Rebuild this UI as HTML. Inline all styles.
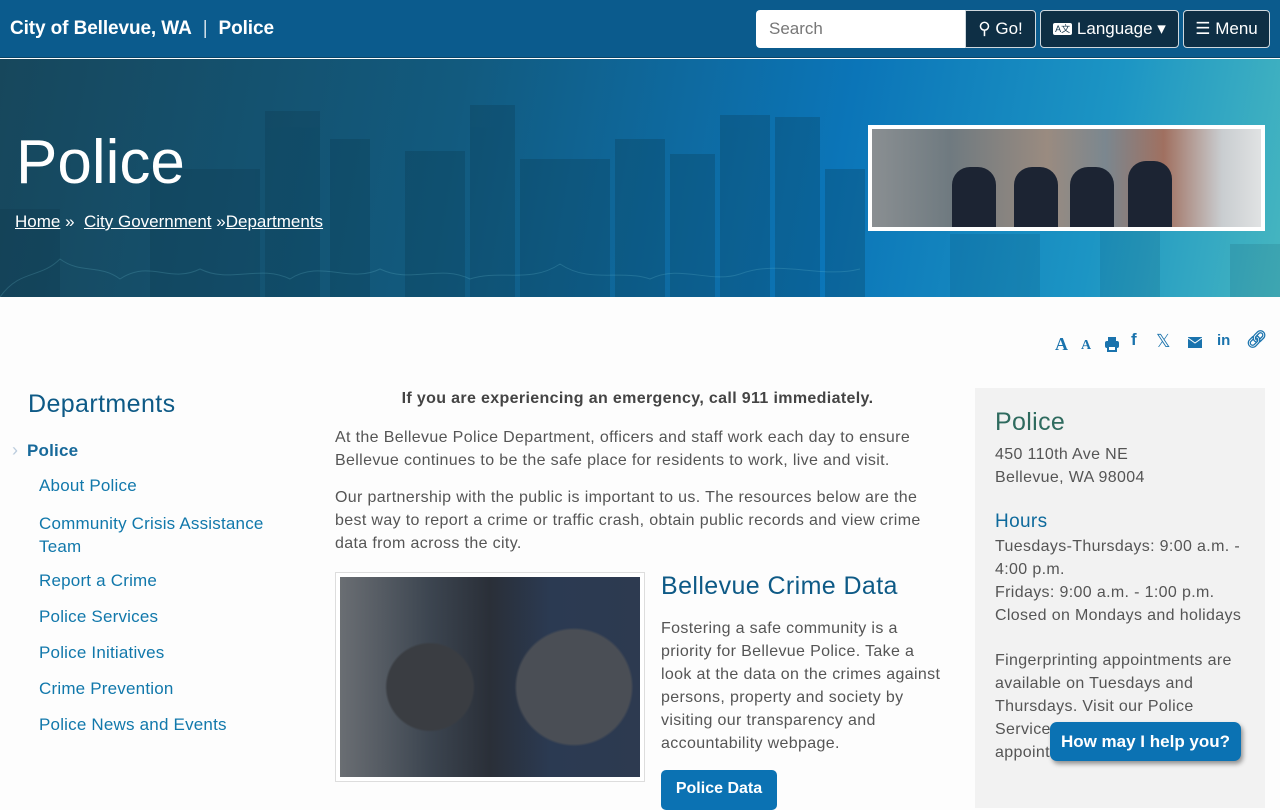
<!DOCTYPE html>
<html><head><meta charset="utf-8"><style>
*{box-sizing:border-box;margin:0;padding:0}
body{width:1280px;height:800px;overflow:hidden;background:#fdfdfd;font-family:"Liberation Sans",sans-serif;color:#444;position:relative}
.hdr{position:absolute;left:0;top:0;width:1280px;height:58px;background:#0b5b8d;border-bottom:1px solid #0a4466}
.brand{position:absolute;left:10px;top:18px;color:#fff;font-size:19px;font-weight:bold;letter-spacing:-0.1px}
.brand span{font-weight:normal;margin:0 11px;opacity:.8}
.search{position:absolute;left:756px;top:10px;width:210px;height:38px;background:#fff;border-radius:4px 0 0 4px;color:#777;font-size:17px;padding:9px 13px}
.btn{position:absolute;top:10px;height:38px;background:#0e2f45;color:#fff;border:1px solid #cfd8de;border-radius:4px;font-size:17px;line-height:36px;text-align:center}
.hero{position:absolute;left:0;top:59px;width:1280px;height:238px;background:linear-gradient(100deg,#17475c 0%,#125a7e 35%,#0b75b8 65%,#1c95c4 85%,#46b6c0 100%);overflow:hidden}
.sky{position:absolute;left:0;bottom:0}
.hero h1{position:absolute;left:16px;top:68px;color:#fff;font-size:62px;font-weight:normal}
.bc{position:absolute;left:15px;top:153px;color:#fff;font-size:17px}
.bc a{color:#fff;text-decoration:underline}
.photo{position:absolute;left:868px;top:66px;width:397px;height:106px;background:#fff;padding:4px}
.photo div{width:100%;height:100%;position:relative;background:linear-gradient(90deg,#8a8f92,#6f7a80 20%,#9a8b80 45%,#7b878f 60%,#a07060 75%,#c9cdd0 90%,#e0e2e3)}
.photo i{position:absolute;bottom:0;width:44px;height:60px;background:#1c2433;border-radius:18px 18px 0 0}
.icons{position:absolute;top:330px;color:#1a73ad;font-weight:bold}
.side h2{position:absolute;left:28px;top:390px;font-size:25px;font-weight:normal;color:#0e5a86;letter-spacing:0.4px}
.nav{position:absolute;left:39px;font-size:17px;color:#1178ab;letter-spacing:0.2px}
.main{position:absolute;left:335px;width:605px;font-size:16px;line-height:23px;color:#555;letter-spacing:0.35px}
.box{position:absolute;left:975px;top:388px;width:290px;height:420px;background:#f2f2f2;padding:0 20px;font-size:16px;line-height:23px;color:#555;letter-spacing:0.35px}
</style></head><body>
<div class="hdr"><div class="brand">City of Bellevue, WA<span>|</span>Police</div>
<div class="search">Search</div>
<div class="btn" style="left:965px;width:71px;border-radius:0 4px 4px 0">&#9906; Go!</div>
<div class="btn" style="left:1040px;width:139px"><span style="display:inline-block;background:#fff;color:#0e2f45;font-size:9px;line-height:12px;padding:0 2px;border-radius:2px;vertical-align:2px">A文</span> Language ▾</div>
<div class="btn" style="left:1183px;width:87px">&#9776; Menu</div>
</div>
<div class="hero">
<svg class="sky" width="1280" height="238" viewBox="0 0 1280 238"><g fill="#0a3447" opacity=".25"><rect x="265" y="52" width="55" height="186"/><rect x="330" y="80" width="40" height="158"/><rect x="405" y="92" width="60" height="146"/><rect x="470" y="46" width="45" height="192"/><rect x="520" y="100" width="90" height="138"/><rect x="615" y="80" width="50" height="158"/><rect x="670" y="95" width="45" height="143"/><rect x="720" y="56" width="50" height="182"/><rect x="775" y="58" width="45" height="180"/><rect x="825" y="110" width="40" height="128"/><rect x="0" y="150" width="60" height="88"/><rect x="150" y="110" width="110" height="128"/></g><g fill="#0a3447" opacity=".12"><rect x="950" y="175" width="90" height="63"/><rect x="1100" y="170" width="60" height="68"/><rect x="1230" y="185" width="50" height="53"/></g><g fill="none" stroke="#7cd" stroke-width="1" opacity=".2"><path d="M0 238 C20 210 40 220 60 200 C80 215 100 205 120 220 C150 200 170 225 200 210 C230 225 260 205 290 220 C320 200 350 225 380 210 C410 225 440 205 470 220 C500 210 530 225 560 205 C590 225 620 210 650 220 C680 205 710 225 740 215 C780 200 820 220 860 210"/></g></svg>
<h1>Police</h1>
<div class="bc"><a>Home</a> » &nbsp;<a>City Government</a> »<a>Departments</a></div>
<div class="photo"><div><i style="left:80px"></i><i style="left:142px"></i><i style="left:198px"></i><i style="left:256px;height:66px"></i></div></div>
</div>
<div class="icons" style="left:1055px;font-size:18px;top:334px;font-family:'Liberation Serif',serif">A</div>
<div class="icons" style="left:1081px;font-size:14px;top:338px;font-family:'Liberation Serif',serif">A</div>
<div class="icons" style="left:1104px;top:336px"><svg width="16" height="16" viewBox="0 0 16 16"><rect x="4" y="1" width="8" height="4" fill="#1a73ad"/><rect x="1" y="5" width="14" height="7" rx="2" fill="#1a73ad"/><rect x="4" y="10" width="8" height="5" fill="#fff" stroke="#1a73ad" stroke-width="2"/></svg></div>
<div class="icons" style="left:1131px;font-size:17px;top:330px">f</div>
<div class="icons" style="left:1156px;top:331px;font-size:18px;font-weight:normal">𝕏</div>
<div class="icons" style="left:1188px;top:335px"><svg width="14" height="11"><rect width="14" height="11" fill="#1a73ad"/><path d="M0 1 L7 6 L14 1" stroke="#fff" fill="none"/></svg></div>
<div class="icons" style="left:1217px;top:332px;font-size:15px">in</div>
<div class="icons" style="left:1246px;top:330px;font-size:17px">🔗︎</div>
<div class="side"><h2>Departments</h2></div>
<div style="position:absolute;left:12px;top:440px;color:#bcd;font-size:18px">›</div>
<div class="nav" style="left:27px;top:441px;font-weight:bold;color:#17699a">Police</div>
<div class="nav" style="top:476px">About Police</div>
<div class="nav" style="top:512px;line-height:23px;width:250px">Community Crisis Assistance Team</div>
<div class="nav" style="top:571px">Report a Crime</div>
<div class="nav" style="top:607px">Police Services</div>
<div class="nav" style="top:643px">Police Initiatives</div>
<div class="nav" style="top:679px">Crime Prevention</div>
<div class="nav" style="top:715px">Police News and Events</div>
<div class="main" style="top:387px;text-align:center;font-weight:bold;color:#444">If you are experiencing an emergency, call 911 immediately.</div>
<div class="main" style="top:426px">At the Bellevue Police Department, officers and staff work each day to ensure Bellevue continues to be the safe place for residents to work, live and visit.</div>
<div class="main" style="top:486px">Our partnership with the public is important to us. The resources below are the best way to report a crime or traffic crash, obtain public records and view crime data from across the city.</div>
<div style="position:absolute;left:335px;top:572px;width:310px;height:210px;border:1px solid #ddd;background:#fff;padding:4px"><div style="width:100%;height:100%;background:radial-gradient(circle at 30% 55%,#3a3d42 0 18%,transparent 19%),radial-gradient(circle at 78% 55%,#4a4e55 0 22%,transparent 23%),linear-gradient(90deg,#6a6e73,#3c4550 30%,#2a2f38 50%,#2b3a52 70%,#2d3a50)"></div></div>
<div style="position:absolute;left:661px;top:572px;font-size:25px;color:#0e5a86;letter-spacing:0.4px">Bellevue Crime Data</div>
<div class="main" style="left:661px;width:285px;top:617px">Fostering a safe community is a priority for Bellevue Police. Take a look at the data on the crimes against persons, property and society by visiting our transparency and accountability webpage.</div>
<div style="position:absolute;left:661px;top:770px;width:116px;height:40px;background:#0b72b3;border-radius:5px;color:#fff;font-weight:bold;font-size:16px;padding-top:10px;text-align:center">Police Data</div>
<div class="box">
<div style="font-size:25px;color:#2f6b5f;margin-top:20px;line-height:28px">Police</div>
<div style="margin-top:7px">450 110th Ave NE<br>Bellevue, WA 98004</div>
<div style="font-size:19px;color:#0e6a9c;margin-top:20px;line-height:26px">Hours</div>
<div>Tuesdays-Thursdays: 9:00 a.m. - 4:00 p.m.<br>Fridays: 9:00 a.m. - 1:00 p.m.<br>Closed on Mondays and holidays</div>
<div style="margin-top:22px">Fingerprinting appointments are available on Tuesdays and Thursdays. Visit our Police Services page to make an appointment.</div>
</div>
<div style="position:absolute;left:1050px;top:722px;width:191px;height:39px;background:#0b72b3;border-radius:7px;color:#fff;font-weight:bold;font-size:17px;line-height:39px;text-align:center;box-shadow:2px 3px 5px rgba(0,0,0,.4)">How may I help you?</div>
</body></html>
